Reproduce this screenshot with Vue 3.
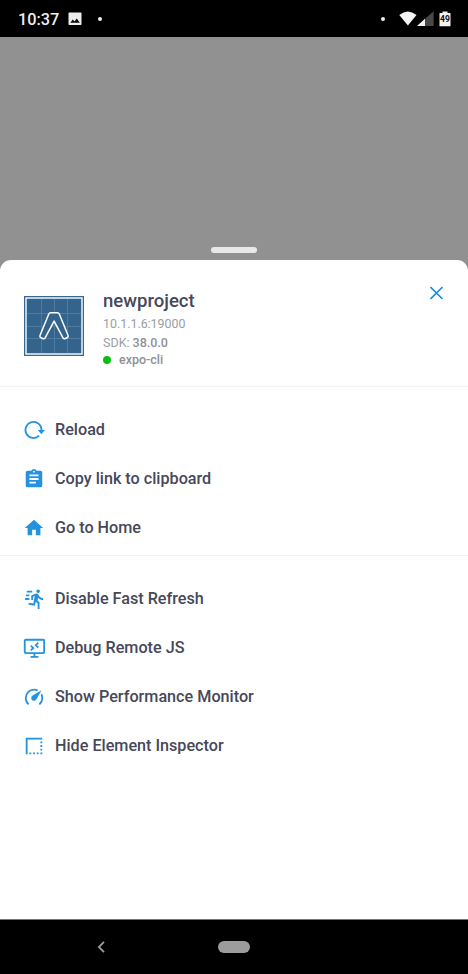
<script setup>
const groups = [
  [
    { icon: 'reload', label: 'Reload' },
    { icon: 'clipboard', label: 'Copy link to clipboard' },
    { icon: 'home', label: 'Go to Home' },
  ],
  [
    { icon: 'run', label: 'Disable Fast Refresh' },
    { icon: 'remote', label: 'Debug Remote JS' },
    { icon: 'speed', label: 'Show Performance Monitor' },
    { icon: 'border', label: 'Hide Element Inspector' },
  ],
]

const paths = {
  clipboard:
    'M17,9H7V7H17M17,13H7V11H17M14,17H7V15H14M12,3A1,1 0 0,1 13,4A1,1 0 0,1 12,5A1,1 0 0,1 11,4A1,1 0 0,1 12,3M19,3H14.82C14.4,1.84 13.3,1 12,1C10.7,1 9.6,1.84 9.18,3H5A2,2 0 0,0 3,5V19A2,2 0 0,0 5,21H19A2,2 0 0,0 21,19V5A2,2 0 0,0 19,3Z',
  home: 'M10,20V14H14V20H19V12H22L12,3L2,12H5V20H10Z',
  run: 'M16.5,5.5A2,2 0 0,0 18.5,3.5A2,2 0 0,0 16.5,1.5A2,2 0 0,0 14.5,3.5A2,2 0 0,0 16.5,5.5M12.9,19.4L13.9,15L16,17V23H18V15.5L15.9,13.5L16.5,10.5C17.89,12.09 19.89,13 22,13V11C20.24,11.03 18.6,10.11 17.7,8.6L16.7,7C16.34,6.4 15.7,6 15,6C14.7,6 14.5,6.1 14.2,6.1L9,8.3V13H11V9.6L12.8,8.9L11.2,17L6.3,16L5.9,18L12.9,19.4M4,9A1,1 0 0,1 3,8A1,1 0 0,1 4,7H7V9H4M5,5A1,1 0 0,1 4,4A1,1 0 0,1 5,3H10V5H5M3,13A1,1 0 0,1 2,12A1,1 0 0,1 3,11H7V13H3Z',
  speed:
    'M12,16A3,3 0 0,1 9,13C9,11.88 9.61,10.9 10.5,10.39L20.21,4.77L14.68,14.35C14.18,15.33 13.17,16 12,16M12,3C13.81,3 15.5,3.5 16.97,4.32L14.87,5.53C14,5.19 13,5 12,5A8,8 0 0,0 4,13C4,15.21 4.89,17.21 6.34,18.65H6.35C6.74,19.04 6.74,19.67 6.35,20.06C5.96,20.45 5.32,20.45 4.93,20.07C3.12,18.26 2,15.76 2,13A10,10 0 0,1 12,3M22,13C22,15.76 20.88,18.26 19.07,20.07C18.68,20.45 18.05,20.45 17.66,20.06C17.27,19.67 17.27,19.04 17.66,18.65C19.11,17.2 20,15.21 20,13C20,12 19.81,11 19.46,10.1L20.67,8C21.5,9.5 22,11.18 22,13Z',
  border:
    'M15,21H17V19H15M11,21H13V19H11M7,21H9V19H7M3,3V21H5V5H21V3M19,9H21V7H19M19,13H21V11H19M19,17H21V15H19M19,21H21V19H19',
}
</script>

<template>
  <div class="screen">
    <header class="status">
      <span class="time">10:37</span>
      <svg class="photo" width="14" height="14" viewBox="0 0 14 14">
        <path fill="#ececec" fill-rule="evenodd" d="M1.3 .5H12.7Q13.5 .5 13.5 1.3V12.2Q13.5 13 12.7 13H1.3Q.5 13 .5 12.2V1.3Q.5 .5 1.3 .5ZM2.3 10.8H11.8L8.8 6.6L6.5 9.6L4.8 7.6Z" />
      </svg>
      <i class="dot"></i>
      <span class="grow"></span>
      <i class="dot"></i>
      <svg class="wifi" width="18" height="15" viewBox="0 0 18 15">
        <path fill="#f4f4f4" d="M.3 4Q8.8-3.2 17.5 4L8.9 14.5Z" />
      </svg>
      <svg class="signal" width="17" height="15" viewBox="0 0 17 15">
        <path fill="#484848" d="M16.6 .2V15H0Z" />
        <path fill="#f4f4f4" d="M8 7.8V15H0Z" />
      </svg>
      <svg class="battery" width="12" height="16" viewBox="0 0 12 16">
        <path fill="#f1f1f1" d="M3.5 .5H8.5V2H11.5V15.3H.5V2H3.5Z" />
        <text x="6" y="11" text-anchor="middle" font-size="8.5" font-weight="700" fill="#111">49</text>
      </svg>
    </header>

    <div class="backdrop"><div class="handle"></div></div>

    <main class="sheet">
      <section class="project">
        <svg class="logo" width="60" height="60" viewBox="0 0 60 60">
          <rect width="60" height="60" fill="#3a6791" />
          <rect x="2" y="2" width="56" height="56" fill="#34638b" stroke="#edf5fa" stroke-width="1.5" />
          <path fill="none" stroke="#4d7ba2" d="M17.5 3V57M30.5 3V57M43.5 3V57M3 17.5H57M3 30.5H57M3 42.5H57" />
          <path fill="#34638b" stroke="#fff" stroke-width="1.5" stroke-linejoin="round" d="M26.5 16.7H33.5Q34.7 16.7 35.3 18L44.1 39.5Q44.6 40.8 43.4 41.5L40.9 42.7Q39.7 43.1 39 41.9L30.1 25.1L21.1 41.9Q20.4 43.1 19.2 42.7L16.7 41.5Q15.5 40.8 16 39.5L24.8 18Q25.4 16.7 26.5 16.7Z" />
        </svg>
        <div class="info">
          <h1>newproject</h1>
          <p class="host">10.1.1.6:19000</p>
          <p class="sdk">SDK: <b>38.0.0</b></p>
          <p class="tool"><i></i><b>expo-cli</b></p>
        </div>
        <button class="close" aria-label="Close">
          <svg width="14" height="14" viewBox="0 0 14 14">
            <path d="M.5 1L12.5 13M12.5 1L.5 13" fill="none" stroke="#168bd5" stroke-width="1.6" />
          </svg>
        </button>
      </section>

      <section v-for="(group, g) in groups" :key="g" class="group">
        <div v-for="item in group" :key="item.label" class="row">
          <svg width="22" height="22" viewBox="0 0 24 24" fill="#2393df">
            <g v-if="item.icon === 'reload'">
              <path fill="none" stroke="#2393df" stroke-width="1.9" d="M17.6 18.2A8.8 8.8 0 1 1 20.2 12.6" />
              <path d="M16.2 12H23.8L20 16.6Z" />
            </g>
            <g v-else-if="item.icon === 'remote'" fill="none" stroke="#2393df" stroke-width="2">
              <rect x="1.9" y="3" width="21.2" height="14.5" rx="1.2" />
              <path d="M12.5 17.5V21.4M8.2 21.6H16.8" />
              <path stroke-width="1.9" d="M8.5 9.3L11.3 12L8.5 14.7M16.7 6.2L13.9 8.9L16.7 11.6" />
            </g>
            <path v-else :d="paths[item.icon]" />
          </svg>
          <span>{{ item.label }}</span>
        </div>
      </section>
    </main>

    <footer class="nav">
      <svg width="8" height="12" viewBox="0 0 8 12">
        <path d="M7 .9L1.9 6L7 11.1" fill="none" stroke="#9c9c9c" stroke-width="1.8" />
      </svg>
      <div class="pill"></div>
      <span></span>
    </footer>
  </div>
</template>

<style>
body { margin: 0; }
</style>

<style scoped>
* { box-sizing: border-box; }
.screen {
  width: 468px;
  height: 974px;
  display: flex;
  flex-direction: column;
  overflow: hidden;
  background: #919191;
  font-family: Roboto, "Liberation Sans", sans-serif;
}
.status {
  height: 37px;
  flex: none;
  display: flex;
  align-items: center;
  background: #000;
  padding: 0 17px 0 18px;
}
.time { width: 50px; font-size: 16.3px; font-weight: 500; line-height: 20px; color: #eee; padding-top: 2px; }
.dot { width: 4px; height: 4px; border-radius: 50%; background: #eee; }
.photo { margin-right: 16px; }
.grow { flex: 1; }
.wifi { margin-left: 14px; }
.signal { margin-left: 0; }
.battery { margin-left: 5px; }
.backdrop {
  height: 223px;
  flex: none;
  display: flex;
  justify-content: center;
  align-items: flex-end;
  padding-bottom: 7px;
}
.handle { width: 46px; height: 6px; border-radius: 3px; background: #e8e8e8; }
.sheet { flex: 1; background: #fff; border-radius: 11px 11px 0 0; }
.project {
  height: 127px;
  display: flex;
  align-items: flex-start;
  padding: 0 24px;
  border-bottom: 1px solid #f3f3f3;
}
.logo { margin-top: 36px; }
.info { flex: 1; margin-left: 19px; padding-top: 30px; color: #9a9da1; }
h1 { margin: 0; font-size: 18.55px; line-height: 22px; font-weight: 500; color: #46485a; }
p { margin: 0; font-size: 12.5px; }
b { font-weight: 500; color: #8e9196; }
.host { line-height: 19px; margin-top: 2px; font-size: 12.4px; }
.sdk { line-height: 19px; }
.tool { display: flex; align-items: center; line-height: 15px; }
.tool i { width: 8px; height: 8px; border-radius: 50%; background: #0abf13; margin-right: 8px; }
.close { border: 0; padding: 0; background: none; display: flex; margin-top: 26px; }
.group { padding: 18px 23px 3px; }
.group + .group { border-top: 1px solid #f3f3f3; }
.row { height: 49px; display: flex; align-items: center; gap: 10px; }
.row span { font-size: 16.18px; line-height: 20px; font-weight: 500; color: #46485a; }
.nav {
  height: 55px;
  flex: none;
  border-top: 1px solid #777;
  background: #000;
  display: flex;
  align-items: center;
  justify-content: space-between;
  padding: 0 97px;
}
.nav span { width: 8px; }
.pill { width: 32px; height: 12px; border-radius: 6px; background: #9c9c9c; }
</style>
